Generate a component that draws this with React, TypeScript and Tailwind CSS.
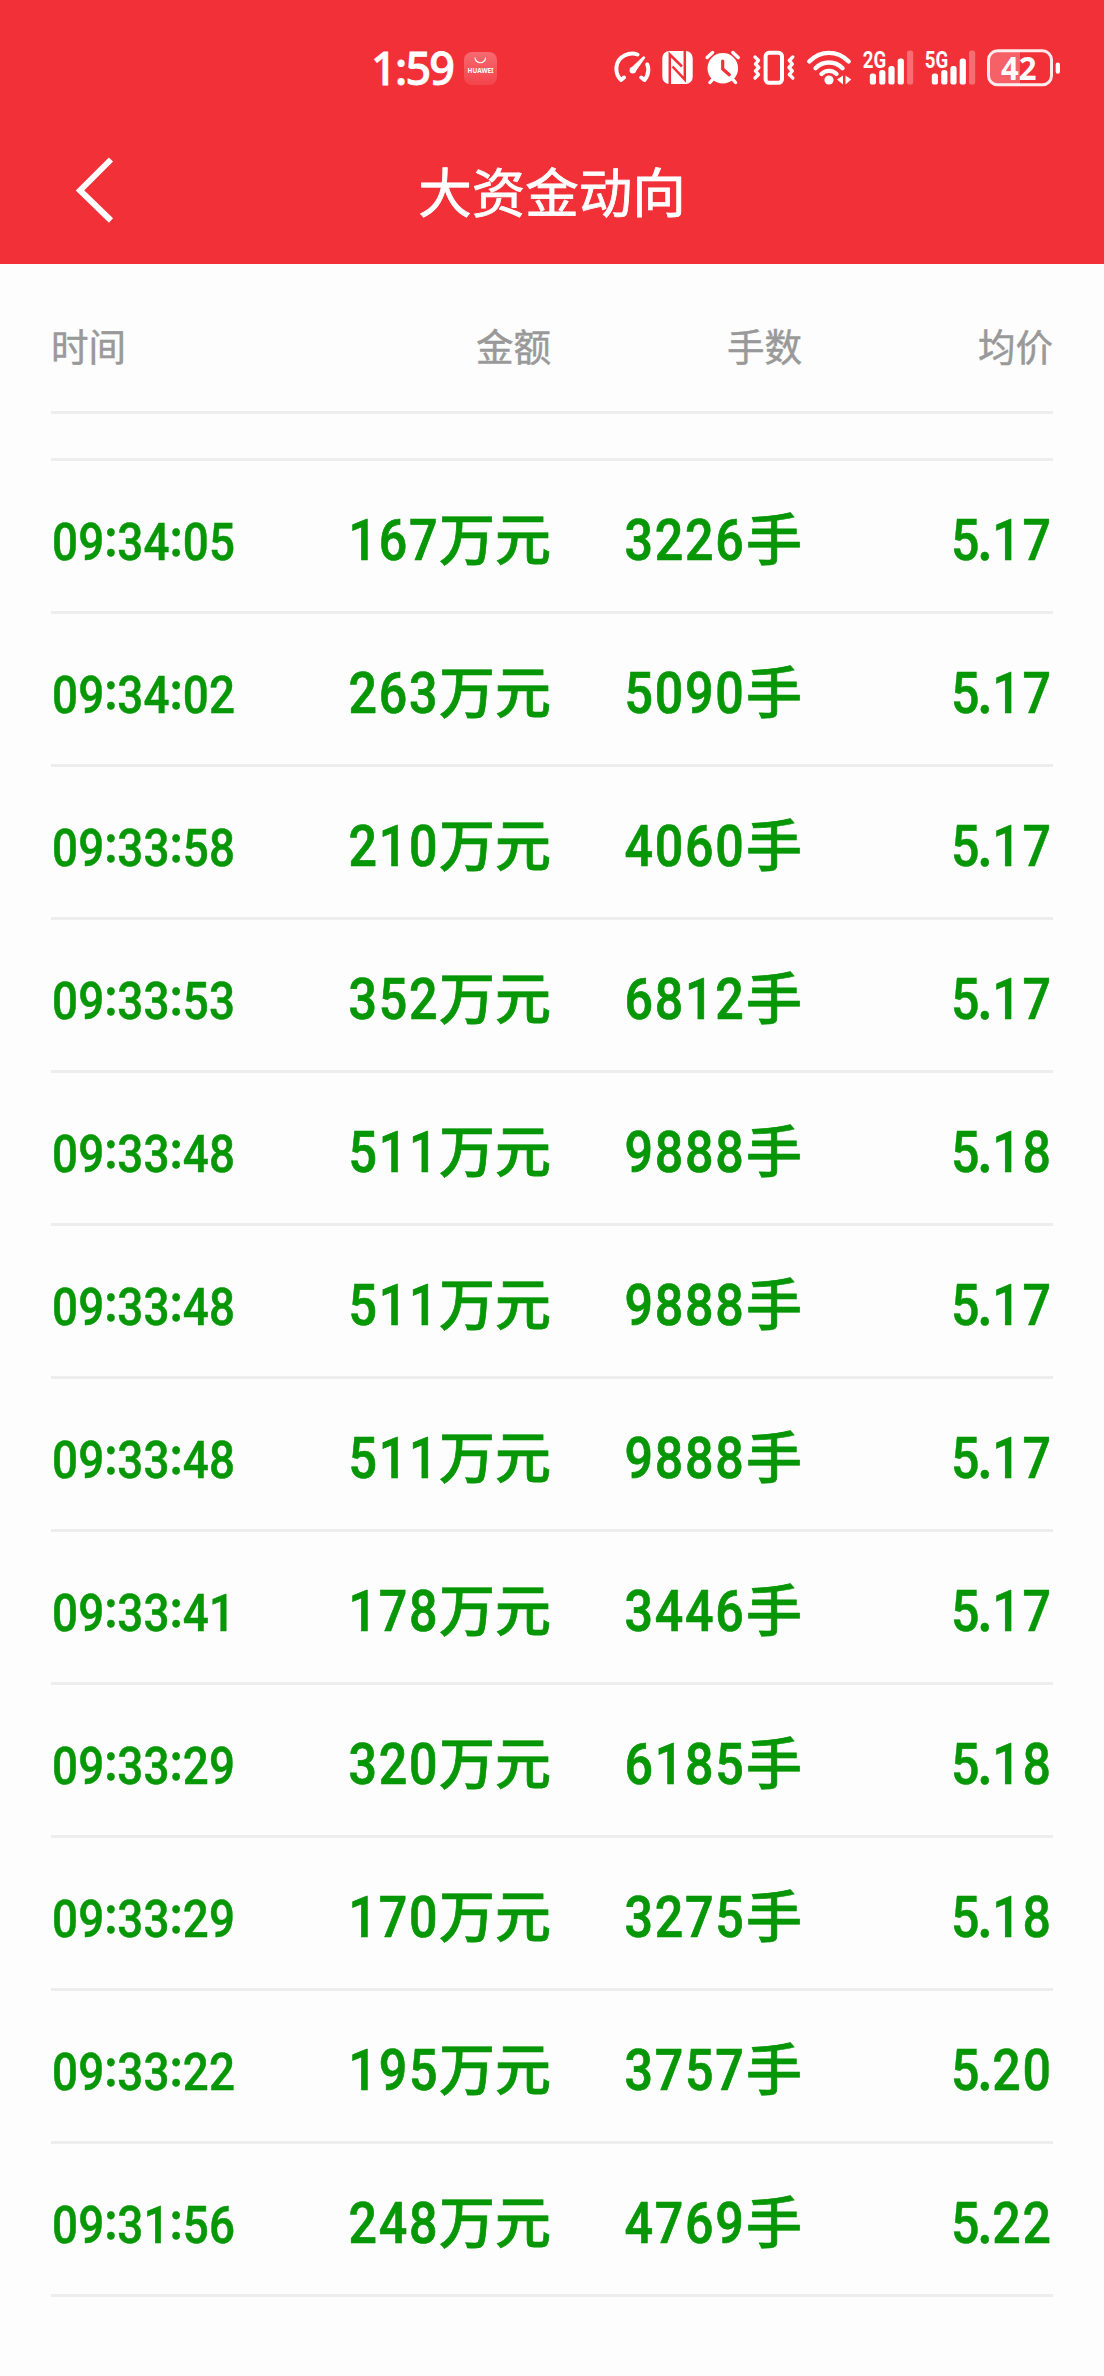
import React from "react";

const trades: [string, string, string, string][] = [
  ["09:34:05", "167", "3226", "5.17"],
  ["09:34:02", "263", "5090", "5.17"],
  ["09:33:58", "210", "4060", "5.17"],
  ["09:33:53", "352", "6812", "5.17"],
  ["09:33:48", "511", "9888", "5.18"],
  ["09:33:48", "511", "9888", "5.17"],
  ["09:33:48", "511", "9888", "5.17"],
  ["09:33:41", "178", "3446", "5.17"],
  ["09:33:29", "320", "6185", "5.18"],
  ["09:33:29", "170", "3275", "5.18"],
  ["09:33:22", "195", "3757", "5.20"],
  ["09:31:56", "248", "4769", "5.22"],
];

function StoreIcon() {
  return (
    <svg width="33" height="33" viewBox="0 0 33 33" className="ml-[11px]">
      <defs>
        <linearGradient id="store" x1="0" y1="0" x2="0" y2="1">
          <stop offset="0" stopColor="#f76a70" />
          <stop offset="1" stopColor="#f3444c" />
        </linearGradient>
      </defs>
      <rect width="33" height="33" rx="8" fill="url(#store)" />
      <path d="M11 5.5a5.3 5.3 0 0 0 10.6 0" fill="none" stroke="#fff" strokeWidth="1.1" />
      <text x="3.6" y="21.2" fontSize="7" fontWeight="700" fontFamily="Noto Sans, sans-serif" fill="#fff" textLength="26" lengthAdjust="spacingAndGlyphs">HUAWEI</text>
    </svg>
  );
}

function GaugeIcon() {
  return (
    <svg width="38" height="36" viewBox="614 50 38 36" fill="none" stroke="#fff" strokeWidth="4" strokeLinecap="round" strokeLinejoin="round">
      <path d="M624 77.500L621 80C613.500 72 615.500 60 624.500 55.500C629 53.200 633.500 53 637.500 54.500" />
      <path d="M647.300 64.500C649.300 70 648 75.500 644.500 80L641.300 77.500" />
      <path d="M631.500 68L643.500 56.500L645 57.500L635.500 71z" fill="#fff" strokeWidth="1" />
      <circle cx="632.800" cy="70.200" r="2" fill="#fff" strokeWidth="2.500" />
    </svg>
  );
}

function NfcIcon() {
  return (
    <svg width="31" height="34" viewBox="662 51 31 34" className="ml-[10px]">
      <rect x="662.300" y="51" width="30.400" height="33" rx="7" fill="#fff" />
      <path d="M669.800 84.500V54.500L682 66.500M684.800 50.500V79.500L672.500 66.500" fill="none" stroke="#f23038" strokeWidth="2.500" />
    </svg>
  );
}

function AlarmIcon() {
  return (
    <svg width="36" height="36" viewBox="705 50 36 36" className="ml-[12px]" strokeLinecap="round" fill="none">
      <circle cx="722.800" cy="68.300" r="15.300" fill="#fff" />
      <path d="M707.200 57.500L712.500 52.500M732.900 52.500L738.200 57.500M713 79L710 82.500M732.500 79L735.500 82.500" stroke="#fff" strokeWidth="3.400" />
      <path d="M722.700 61V69L729.300 74.800" stroke="#f23038" strokeWidth="3.200" strokeLinejoin="round" />
    </svg>
  );
}

function VibrateIcon() {
  return (
    <svg width="44" height="36" viewBox="752 50 44 36" className="ml-[11px]" fill="none" stroke="#fff" strokeWidth="3.400" strokeLinecap="round" strokeLinejoin="round">
      <rect x="765.600" y="52.800" width="16.400" height="30" rx="3.500" strokeWidth="4" />
      <path d="M755 57L758.500 60.500L755.500 64L758.800 67.500L755.500 71L758.500 74.500L755 78" />
      <path d="M792.800 57L789.300 60.500L792.300 64L789 67.500L792.300 71L789.300 74.500L792.800 78" />
    </svg>
  );
}

function WifiIcon() {
  return (
    <svg width="46" height="36" viewBox="806 50 46 36" className="ml-[10px]" fill="none" stroke="#fff" strokeWidth="4.400" strokeLinecap="round">
      <path d="M809.300 61.500C820.500 50 837.500 50 848.700 61.500" />
      <path d="M815.500 68.200C823 60.500 835 60.500 842.500 68.200" />
      <path d="M821.500 74C825.500 69.800 832.500 69.800 836.500 74" />
      <circle cx="829" cy="80" r="4.600" fill="#fff" stroke="none" />
      <path d="M843 75.500V84.500L837 79.500zM845.500 75.500V84.500L851.300 79.500z" fill="#fff" stroke="none" />
    </svg>
  );
}

function SignalIcon({ label }: { label: string }) {
  return (
    <svg width="52" height="50" viewBox="862 43 52 50" className="ml-[10px] shrink-0" fill="#fff">
      <text x="862.800" y="67.500" fontSize="23" fontWeight="700" fontFamily="Roboto, sans-serif" textLength="23.500" lengthAdjust="spacingAndGlyphs">{label}</text>
      <rect x="869.800" y="73.500" width="6.200" height="11" rx="2.600" />
      <rect x="879.200" y="70" width="6.200" height="14.500" rx="2.600" />
      <rect x="888.400" y="66" width="6.200" height="18.500" rx="2.600" />
      <rect x="897.700" y="58.500" width="6.200" height="26" rx="2.600" />
      <rect x="907" y="50.500" width="6.200" height="34" rx="2.600" opacity="0.3" />
    </svg>
  );
}

function BatteryIcon() {
  return (
    <svg width="74" height="54" viewBox="987 40.500 74 54" className="ml-[11px]">
      <path d="M1020 50V85H998A9 9 0 0 1 989 76V59A9 9 0 0 1 998 50z" fill="#f66067" />
      <rect x="988.500" y="50.300" width="63" height="34" rx="9" fill="none" stroke="#fff" strokeOpacity="0.9" strokeWidth="3" />
      <rect x="1055.700" y="62" width="4.300" height="11.300" rx="2" fill="#fff" />
      <text x="1001" y="79" fontSize="32.500" fontWeight="700" fontFamily="Noto Sans, sans-serif" fill="#fff" textLength="35.500" lengthAdjust="spacingAndGlyphs">42</text>
    </svg>
  );
}

/* Narrow numerals; separators are nudged so they sit mid-height. */
function Time({ value }: { value: string }) {
  return (
    <span className="inline-flex origin-left scale-x-[0.88] [-webkit-text-stroke:0.500px]">
      {value.split(":").map((part, i) => (
        <React.Fragment key={i}>
          {i > 0 && <span className="-mt-[4px] mb-[4px] w-[14.500px] text-center font-bold">:</span>}
          <span className="tracking-[0.300px]">{part}</span>
        </React.Fragment>
      ))}
    </span>
  );
}

function Price({ value }: { value: string }) {
  const [whole, cents] = value.split(".");
  return (
    <span className="inline-block origin-right scale-x-[0.88] tracking-[2px] [-webkit-text-stroke:0.500px]">
      {whole}
      <span className="-mr-[2px] -ml-[4px] font-bold">.</span>
      {cents}
    </span>
  );
}

export default function App() {
  return (
    <div className="min-h-[2376px] w-[1104px] bg-[#fdfdfd] font-['Noto_Sans_CJK_SC',sans-serif]">
      <header className="h-[264px] bg-[#f23038] text-white">
        <div className="flex h-[136px] items-center pl-[371px]">
          <span className="mb-[2px] block w-[82px] font-['Noto_Sans'] text-[45px] font-medium leading-none tracking-[-1.800px] whitespace-nowrap [-webkit-text-stroke:0.800px]">1:59</span>
          <StoreIcon />
          <div className="ml-[117px] flex items-center">
            <GaugeIcon />
            <NfcIcon />
            <AlarmIcon />
            <VibrateIcon />
            <WifiIcon />
            <SignalIcon label="2G" />
            <SignalIcon label="5G" />
            <BatteryIcon />
          </div>
        </div>
        <div className="grid h-[107px] grid-cols-[1fr_auto_1fr] items-center">
          <svg width="42" height="70" viewBox="74 155 42 70" className="ml-[74px]" fill="none">
            <path d="M111 159.500L80 190.500L111 220.500" stroke="#fff" strokeWidth="6" />
          </svg>
          <h1 className="text-[53.500px] font-normal leading-none [-webkit-text-stroke:0.800px]">大资金动向</h1>
        </div>
      </header>

      <main className="mx-[51px]">
        <div className="grid h-[150px] grid-cols-[249px_251px_251px_251px] border-b-[3px] border-[#ededed] pt-[61px] text-right text-[37.500px] leading-[40px] text-[#999] [-webkit-text-stroke:0.500px]">
          <span className="text-left">时间</span>
          <span>金额</span>
          <span>手数</span>
          <span>均价</span>
        </div>
        <div className="h-[47px] border-b-[3px] border-[#ededed]" />
        {trades.map(([time, amount, lots, price], i) => (
          <div key={i} className="grid h-[153px] grid-cols-[249px_251px_251px_251px] items-baseline border-b-[3px] border-[#ededed] pt-[47px] text-right text-[56px] font-medium leading-[56px] whitespace-nowrap text-[#069606] [-webkit-text-stroke:0.700px]">
            <span className="pl-px text-left font-['Roboto'] text-[52px]">
              <Time value={time} />
            </span>
            <span>
              <span className="inline-block origin-right scale-x-[0.88] font-['Roboto'] text-[57px] tracking-[2px]">{amount}</span>万元
            </span>
            <span>
              <span className="inline-block origin-right scale-x-[0.88] font-['Roboto'] text-[57px] tracking-[2px]">{lots}</span>手
            </span>
            <span className="font-['Roboto'] text-[57px]">
              <Price value={price} />
            </span>
          </div>
        ))}
      </main>
    </div>
  );
}
